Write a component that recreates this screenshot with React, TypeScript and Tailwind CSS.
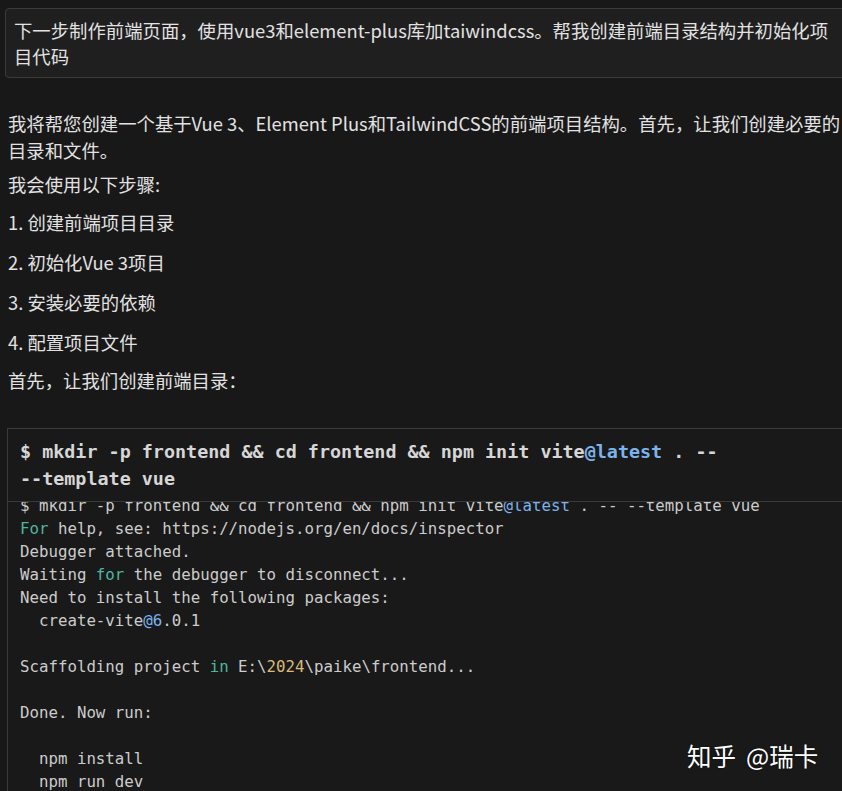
const body = { fontFamily: '"Noto Sans CJK SC", "Noto Sans", sans-serif' };
const mono = { fontFamily: '"DejaVu Sans Mono", "Liberation Mono", monospace' };

const steps = ["1. 创建前端项目目录", "2. 初始化Vue 3项目", "3. 安装必要的依赖", "4. 配置项目文件"];

function Kw({ children }: { children: React.ReactNode }) {
  return <span className="text-[#4fb59f]">{children}</span>;
}

function At({ children }: { children: React.ReactNode }) {
  return <span className="text-[#7cb3ec]">{children}</span>;
}

export default function App() {
  return (
    <div className="relative h-[791px] w-[842px] overflow-hidden bg-[#181818]" style={body}>
      <div className="w-[856px] pt-[8px]">
        {/* user prompt */}
        <div className="ml-[5px] rounded-[4px] border border-[#3b3b3b] bg-[#1f1f1f] py-[8px] pl-[8px] pr-[20px] text-[18.36px] leading-[26px] text-[#e2e2e2]">
          下一步制作前端页面，使用vue3和element-plus库加taiwindcss。帮我创建前端目录结构并初始化项目代码
        </div>

        {/* reply */}
        <div className="px-[8px] text-[18.36px] leading-[27px] text-[#e2e2e2]">
          <p className="mt-[32px]">
            我将帮您创建一个基于Vue 3、Element Plus和TailwindCSS的前端项目结构。首先，让我们创建必要的目录和文件。
          </p>
          <p className="mt-[7px]">我会使用以下步骤:</p>
          <div className="mt-[11px] flex flex-col gap-[13px]">
            {steps.map((s) => (
              <p key={s}>{s}</p>
            ))}
          </div>
          <p className="mt-[11px]">首先，让我们创建前端目录：</p>
        </div>

        {/* code block */}
        <div className="ml-[7px] mt-[34px] border border-[#3a3a3a] bg-[#191919]" style={mono}>
          <div className="px-[12px] py-[9px] text-[18.4px] font-bold leading-[27px] text-[#d6d6d6]">
            <div className="whitespace-pre">
              $ mkdir -p frontend && cd frontend && npm init vite<At>@latest</At> . --
            </div>
            <div className="whitespace-pre">--template vue</div>
          </div>
          <div className="h-[300px] overflow-hidden border-t border-[#3a3a3a]">
            <div className="-mt-[8px] whitespace-pre px-[12px] text-[15.75px] leading-[23px] text-[#cccccc]">
              <div>
                $ mkdir -p frontend && cd frontend && npm init vite<At>@latest</At> . -- --template vue
              </div>
              <div>
                <Kw>For</Kw> help, see: https://nodejs.org/en/docs/inspector
              </div>
              <div>Debugger attached.</div>
              <div>
                Waiting <Kw>for</Kw> the debugger to disconnect...
              </div>
              <div>Need to install the following packages:</div>
              <div>
                {"  create-vite"}
                <At>@6</At>.0.1
              </div>
              <div>&nbsp;</div>
              <div>
                Scaffolding project <Kw>in</Kw> E:\<span className="text-[#d9b978]">2024</span>\paike\frontend...
              </div>
              <div>&nbsp;</div>
              <div>Done. Now run:</div>
              <div>&nbsp;</div>
              <div>{"  npm install"}</div>
              <div>{"  npm run dev"}</div>
            </div>
          </div>
        </div>
      </div>

      {/* watermark */}
      <div className="absolute left-[687px] top-[740px] flex gap-[10px] text-[24.5px] leading-[32px] text-white [text-shadow:0_0_2px_rgba(0,0,0,0.6)]">
        <span>知乎</span>
        <span>@瑞卡</span>
      </div>
    </div>
  );
}
